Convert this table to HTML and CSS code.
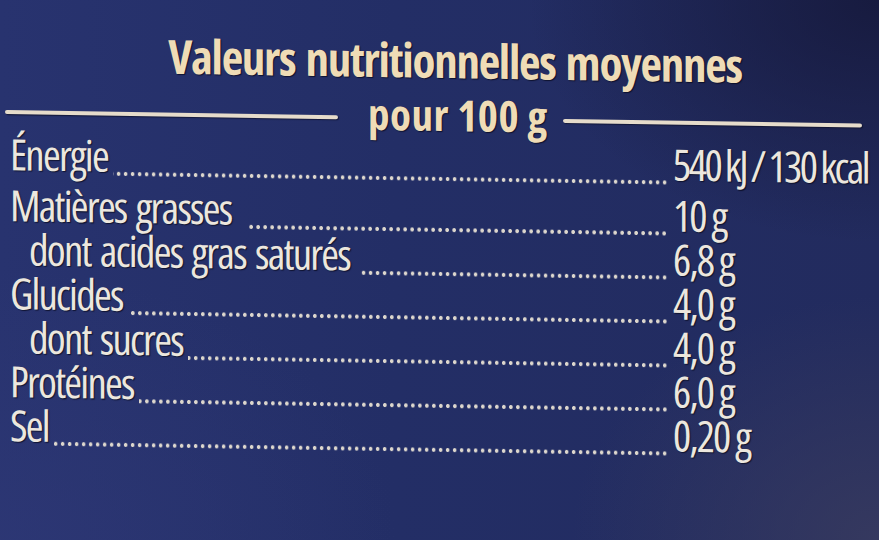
FILE: index.html
```html
<!DOCTYPE html>
<html lang="fr">
<head>
<meta charset="utf-8">
<title>Valeurs nutritionnelles moyennes</title>
<link rel="stylesheet" href="styles.css">
</head>
<body>
<main class="sheet">
  <header class="head">
    <h1 class="title">Valeurs nutritionnelles moyennes</h1>
    <div class="subtitle">
      <span class="rule rule-left"></span>
      <span class="per">pour 100 g</span>
      <span class="rule rule-right"></span>
    </div>
  </header>
  <ul class="facts">
    <li class="row row-first"><span class="label">Énergie</span><span class="dots"></span><span class="value">540 kJ / 130 kcal</span></li>
    <li class="row"><span class="label">Matières grasses</span><span class="dots dots-gap"></span><span class="value">10 g</span></li>
    <li class="row row-sub"><span class="label">dont acides gras saturés</span><span class="dots dots-gap-s"></span><span class="value">6,8 g</span></li>
    <li class="row"><span class="label">Glucides</span><span class="dots"></span><span class="value">4,0 g</span></li>
    <li class="row row-sub"><span class="label">dont sucres</span><span class="dots"></span><span class="value">4,0 g</span></li>
    <li class="row"><span class="label">Protéines</span><span class="dots"></span><span class="value">6,0 g</span></li>
    <li class="row"><span class="label">Sel</span><span class="dots"></span><span class="value">0,20 g</span></li>
  </ul>
</main>
</body>
</html>
```
FILE: styles.css
```css
html, body {
  margin: 0;
  padding: 0;
  width: 879px;
  height: 540px;
  overflow: hidden;
}

body {
  background:
    radial-gradient(ellipse 40% 45% at 100% 0%, rgba(22, 25, 60, 0.9), rgba(22, 25, 60, 0) 100%),
    radial-gradient(ellipse 35% 45% at 100% 100%, rgba(58, 60, 95, 0.8), rgba(58, 60, 95, 0) 100%),
    radial-gradient(ellipse 45% 50% at 0% 100%, rgba(46, 56, 118, 0.7), rgba(46, 56, 118, 0) 100%),
    linear-gradient(90deg, #28336f 0%, #232e66 45%, #222b5e 100%);
  font-family: "Open Sans", "Roboto Condensed", "DejaVu Sans Condensed", sans-serif;
  font-stretch: 75%;
  font-variant-ligatures: none;
}

/* the printed label sits with a slight tilt */
.sheet {
  width: 879px;
  transform-origin: 0 0;
  transform: skewY(0.9deg);
  text-shadow: 1px 1px 1px rgba(8, 10, 30, 0.75);
}

.head {
  padding-top: 30px;
  color: #efdcb6;
}

.title {
  margin: 0;
  padding-left: 31px;
  text-align: center;
  font-size: 47px;
  line-height: 47px;
  font-weight: 700;
  letter-spacing: -1.3px;
  word-spacing: 3px;
}

.subtitle {
  display: flex;
  margin-top: 9px;
  padding: 0 17px 0 5px;
  height: 43px;
}

.per {
  font-size: 43px;
  line-height: 43px;
  font-weight: 700;
  letter-spacing: 0.5px;
  margin: 0 15px 0 30px;
  white-space: nowrap;
}

.rule {
  align-self: flex-end;
  height: 4px;
  margin-bottom: 15px;
  background: #e6dccb;
  border-radius: 2px;
  box-shadow: 1px 1px 1px rgba(8, 10, 30, 0.6);
}

.rule-left {
  flex: 0 0 333px;
}

.rule-right {
  flex: 1;
}

.facts {
  list-style: none;
  margin: 3px 0 0 0;
  padding: 0;
}

.row {
  display: flex;
  align-items: baseline;
  height: 44px;
  padding-left: 10px;
  font-size: 43px;
  line-height: 44px;
  color: #ece7de;
}

.row-first {
  margin-bottom: 7px;
}

.row-sub {
  padding-left: 29px;
}

.label {
  white-space: nowrap;
  letter-spacing: -1.8px;
  word-spacing: 3px;
}

.dots {
  flex: 1;
  align-self: flex-end;
  height: 4px;
  margin: 0 0 2px 5px;
  background-image: radial-gradient(circle 2.2px at 50% 50%, #ddd7cd 0%, #ddd7cd 75%, rgba(221, 215, 205, 0) 100%);
  background-size: 7px 4px;
  background-repeat: repeat-x;
  background-position: right center;
}

.dots-gap {
  margin-left: 15px;
}

.dots-gap-s {
  margin-left: 10px;
}

.value {
  flex: 0 0 211px;
  min-width: 0;
  box-sizing: border-box;
  padding-left: 5px;
  white-space: nowrap;
  letter-spacing: -2px;
  word-spacing: 0;
}

.row-first .value {
  padding-left: 5px;
  letter-spacing: -2.5px;
  word-spacing: -1px;
}
```
